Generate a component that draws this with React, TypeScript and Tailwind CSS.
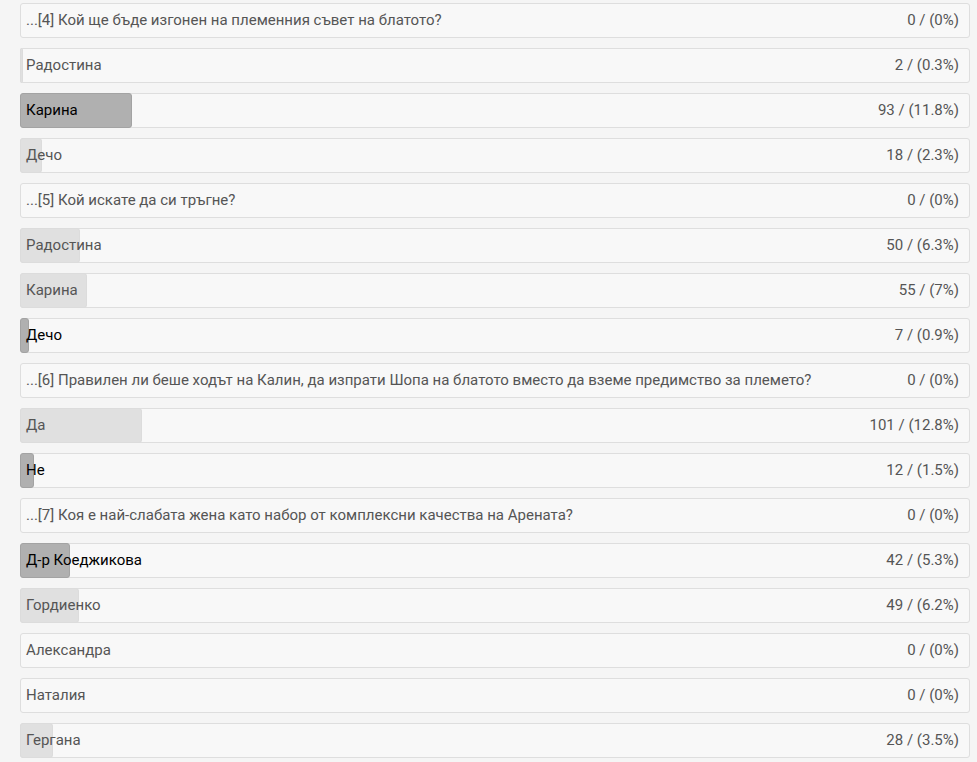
import React from "react";

type Row = { label: string; count: number; pct: number; q?: boolean; dark?: boolean };

const rows: Row[] = [
  { label: "...[4] Кой ще бъде изгонен на племенния съвет на блатото?", count: 0, pct: 0, q: true },
  { label: "Радостина", count: 2, pct: 0.3 },
  { label: "Карина", count: 93, pct: 11.8, dark: true },
  { label: "Дечо", count: 18, pct: 2.3 },
  { label: "...[5] Кой искате да си тръгне?", count: 0, pct: 0, q: true },
  { label: "Радостина", count: 50, pct: 6.3 },
  { label: "Карина", count: 55, pct: 7 },
  { label: "Дечо", count: 7, pct: 0.9, dark: true },
  { label: "...[6] Правилен ли беше ходът на Калин, да изпрати Шопа на блатото вместо да вземе предимство за племето?", count: 0, pct: 0, q: true },
  { label: "Да", count: 101, pct: 12.8 },
  { label: "Не", count: 12, pct: 1.5, dark: true },
  { label: "...[7] Коя е най-слабата жена като набор от комплексни качества на Арената?", count: 0, pct: 0, q: true },
  { label: "Д-р Коеджикова", count: 42, pct: 5.3, dark: true },
  { label: "Гордиенко", count: 49, pct: 6.2 },
  { label: "Александра", count: 0, pct: 0 },
  { label: "Наталия", count: 0, pct: 0 },
  { label: "Гергана", count: 28, pct: 3.5 },
];

export default function App() {
  return (
    <div
      className="min-h-[762px] bg-[#f5f5f5] pl-[20px] pr-[7px] pt-[3px] flex flex-col gap-[10px]"
      style={{ fontFamily: "Roboto, 'Liberation Sans', sans-serif" }}
    >
      {rows.map((r, i) => (
        <div
          key={i}
          className="relative h-[35px] w-[950px] rounded-[3px] border border-[#dedede] bg-[#f8f8f8] flex items-center justify-between pl-[5px] pr-[10px] text-[15px]"
        >
          {r.pct > 0 && (
            <div
              className={
                r.dark
                  ? "absolute -top-px -bottom-px -left-px rounded-[3px] border border-[#a3a3a3] bg-[#b0b0b0]"
                  : "absolute -top-px -bottom-px -left-px rounded-[3px] border border-[#dcdcdc] bg-[#e0e0e0]"
              }
              style={{ width: `${(r.pct / 100) * 950}px` }}
            />
          )}
          <span className={r.dark ? "relative text-black" : "relative text-[#555555]"}>{r.label}</span>
          <span className="relative text-[#555555]">
            {r.count} / ({r.pct}%)
          </span>
        </div>
      ))}
    </div>
  );
}
